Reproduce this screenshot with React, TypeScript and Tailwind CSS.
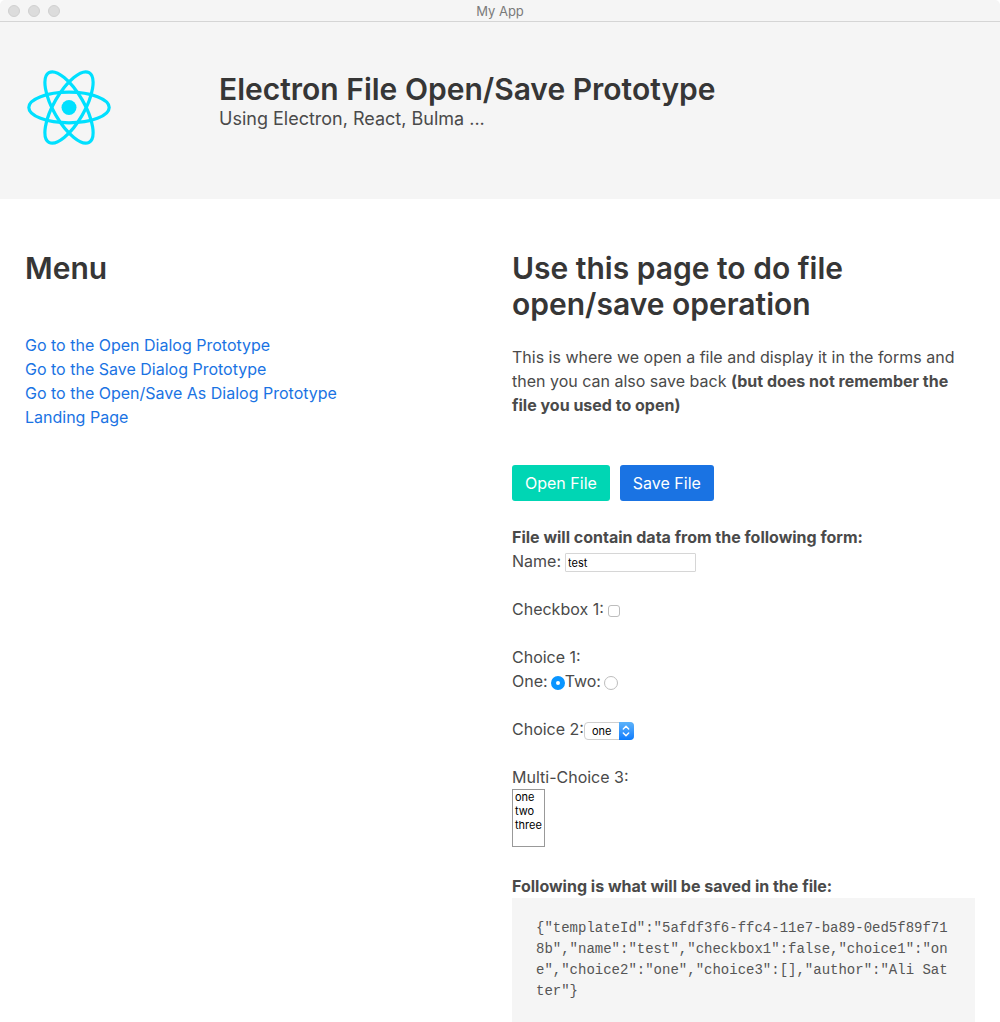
import { useState } from "react";

const links = [
  "Go to the Open Dialog Prototype",
  "Go to the Save Dialog Prototype",
  "Go to the Open/Save As Dialog Prototype",
  "Landing Page",
];

function Atom() {
  return (
    <svg viewBox="0 0 84 76" className="h-[76px] w-[84px]" fill="none" stroke="#00e0ff" strokeWidth="3.2" aria-label="React logo" role="img">
      <circle cx="42" cy="37.5" r="7.5" fill="#00e0ff" stroke="none" />
      <ellipse cx="42" cy="37.5" rx="40.2" ry="15.3" />
      <ellipse cx="42" cy="37.5" rx="40.2" ry="15.3" transform="rotate(60 42 37.5)" />
      <ellipse cx="42" cy="37.5" rx="40.2" ry="15.3" transform="rotate(120 42 37.5)" />
    </svg>
  );
}

export default function App() {
  const [name, setName] = useState("test");
  const [checked, setChecked] = useState(false);
  const [choice1, setChoice1] = useState("one");
  const [choice2, setChoice2] = useState("one");
  const [choice3, setChoice3] = useState<string[]>([]);
  const data = {
    templateId: "5afdf3f6-ffc4-11e7-ba89-0ed5f89f718b",
    name,
    checkbox1: checked,
    choice1,
    choice2,
    choice3,
    author: "Ali Satter",
  };
  const radio =
    "mt-[7px] size-3.5 appearance-none rounded-full border border-[#bdbdbd] bg-white checked:border-[5px] checked:border-[#0a95ff]";
  return (
    <div className="min-h-screen bg-white font-['Inter',sans-serif] text-base leading-6 text-[#4a4a4a]">
      <div className="flex h-[22px] items-center rounded-t-[5px] border-b border-[#d5d5d5] bg-[#f5f5f5] px-2 text-[13px] text-[#7a7a7a]">
        <div className="flex flex-1 gap-2">
          <span className="size-3 rounded-full border border-[#d0d0d0] bg-[#dcdcdc]" />
          <span className="size-3 rounded-full border border-[#d0d0d0] bg-[#dcdcdc]" />
          <span className="size-3 rounded-full border border-[#d0d0d0] bg-[#dcdcdc]" />
        </div>
        <span>My App</span>
        <div className="flex-1" />
      </div>
      <header className="flex bg-[#f5f5f5] px-[27px] pt-12 pb-[53px]">
        <div className="w-48 shrink-0">
          <Atom />
        </div>
        <div className="pt-px">
          <h1 className="text-[30px] leading-9 font-semibold text-[#363636]">Electron File Open/Save Prototype</h1>
          <p className="text-lg leading-6">Using Electron, React, Bulma ...</p>
        </div>
      </header>
      <main className="grid grid-cols-2 gap-6 px-[25px] pt-[51px]">
        <nav>
          <h2 className="text-[30px] leading-9 font-semibold text-[#363636]">Menu</h2>
          <ul className="mt-[47px]">
            {links.map((l) => (
              <li key={l}>
                <a href="#" className="text-[#1a73e3]">{l}</a>
              </li>
            ))}
          </ul>
        </nav>
        <section>
          <h2 className="text-[30px] leading-9 font-semibold text-[#363636]">Use this page to do file open/save operation</h2>
          <p className="mt-[23px]">
            This is where we open a file and display it in the forms and then you can also save back{" "}
            <strong className="font-bold">(but does not remember the file you used to open)</strong>
          </p>
          <div className="mt-12 flex gap-2.5">
            <button className="h-9 rounded-[3px] bg-[#00d6b4] px-[13px] text-white">Open File</button>
            <button className="h-9 rounded-[3px] bg-[#1a73e3] px-[13px] text-white">Save File</button>
          </div>
          <p className="mt-6 font-bold">File will contain data from the following form:</p>
          <label className="flex items-start gap-1">
            Name:
            <input value={name} onChange={(e) => setName(e.target.value)} className="mt-1 h-[19px] w-[131px] rounded-[1px] border border-[#d6d6d6] px-0.5 text-[11px] text-black" />
          </label>
          <label className="mt-6 flex items-start gap-1">
            Checkbox 1:
            <input type="checkbox" checked={checked} onChange={(e) => setChecked(e.target.checked)} className="mt-2 size-3 appearance-none rounded-[3px] border border-[#bdbdbd] bg-white checked:bg-[#0a95ff]" />
          </label>
          <p className="mt-6">Choice 1:</p>
          <div className="flex items-start">
            <label className="flex gap-[3px]">
              One:
              <input type="radio" name="choice1" checked={choice1 === "one"} onChange={() => setChoice1("one")} className={radio} />
            </label>
            <label className="flex gap-[3px]">
              Two:
              <input type="radio" name="choice1" checked={choice1 === "two"} onChange={() => setChoice1("two")} className={radio} />
            </label>
          </div>
          <div className="mt-6 flex items-start">
            <label htmlFor="c2">Choice 2:</label>
            <div className="relative mt-[5px] flex">
              <select id="c2" value={choice2} onChange={(e) => setChoice2(e.target.value)} className="h-[18px] w-[50px] appearance-none rounded-[4px] border border-[#cfcfcf] bg-white pl-[7px] text-[11px] leading-4 text-black">
                <option>one</option>
                <option>two</option>
              </select>
              <span className="pointer-events-none absolute inset-y-0 right-0 flex w-[15px] items-center justify-center rounded-r-[4px] bg-linear-to-b from-[#5cb3fa] to-[#067bfd]">
                <svg viewBox="0 0 8 12" className="h-3 w-2" fill="none" stroke="white" strokeWidth="1.4" strokeLinecap="round" strokeLinejoin="round" aria-hidden="true">
                  <path d="M1.3 4 4 1.3 6.7 4M1.3 8 4 10.7 6.7 8" />
                </svg>
              </span>
            </div>
          </div>
          <label className="mt-6 block" htmlFor="c3">Multi-Choice 3:</label>
          <select id="c3" multiple value={choice3} onChange={(e) => setChoice3(Array.from(e.target.selectedOptions, (o) => o.value))} className="block h-[58px] border border-[#999] text-[11px] text-black">
            <option className="px-0.5">one</option>
            <option className="px-0.5">two</option>
            <option className="px-0.5">three</option>
          </select>
          <p className="mt-[27px] font-bold">Following is what will be saved in the file:</p>
          <pre className="bg-[#f5f5f5] px-6 py-5 font-['Liberation_Mono',monospace] text-sm leading-[21px] break-all whitespace-pre-wrap text-[#555]">{JSON.stringify(data)}</pre>
        </section>
      </main>
    </div>
  );
}
